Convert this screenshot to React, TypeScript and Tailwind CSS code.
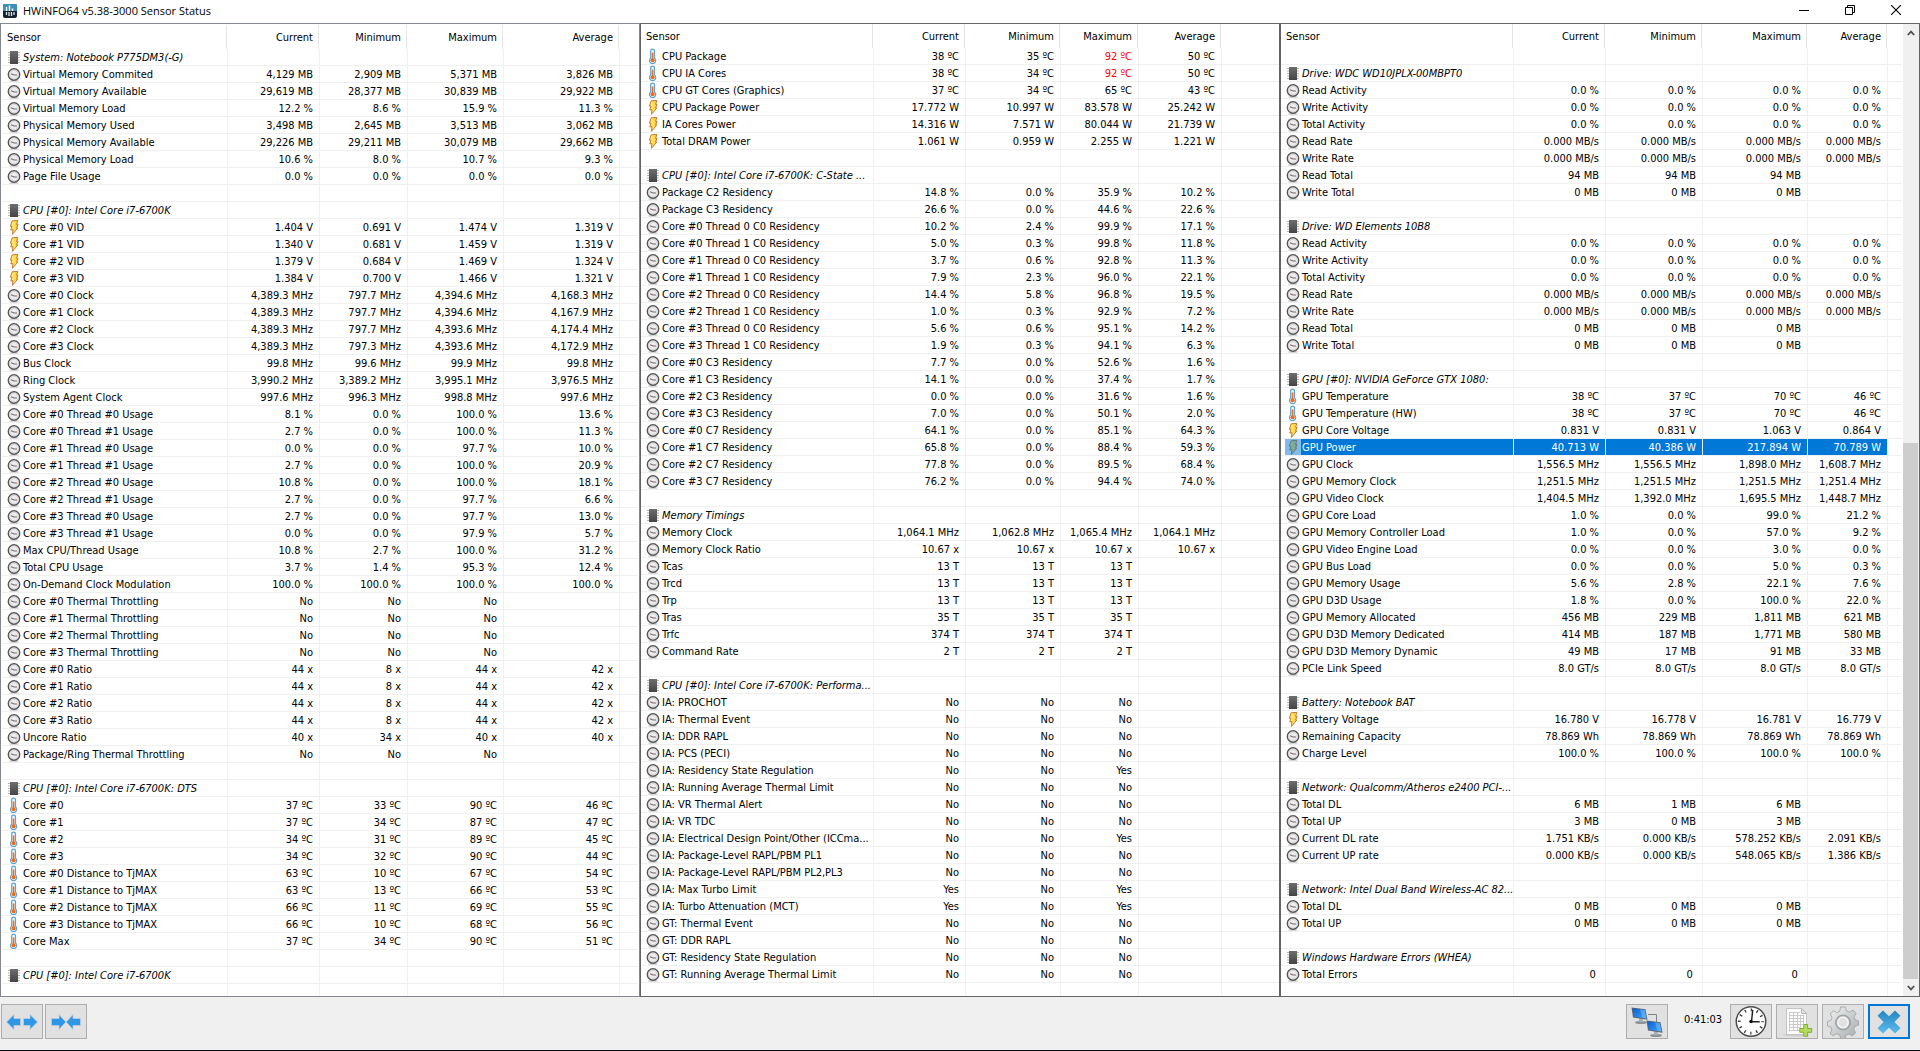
import React from 'react';
import clsx from 'clsx';

type Kind = 'chip' | 'clock' | 'bolt' | 'temp';
type Row = [kind: Kind, name: string, values?: string] | null;

// null is an empty separator row, values are separated by "|"
const leftRows: Row[] = [
  ['chip', 'System: Notebook P775DM3(-G)'],
  ['clock', 'Virtual Memory Commited', '4,129 MB|2,909 MB|5,371 MB|3,826 MB'],
  ['clock', 'Virtual Memory Available', '29,619 MB|28,377 MB|30,839 MB|29,922 MB'],
  ['clock', 'Virtual Memory Load', '12.2 %|8.6 %|15.9 %|11.3 %'],
  ['clock', 'Physical Memory Used', '3,498 MB|2,645 MB|3,513 MB|3,062 MB'],
  ['clock', 'Physical Memory Available', '29,226 MB|29,211 MB|30,079 MB|29,662 MB'],
  ['clock', 'Physical Memory Load', '10.6 %|8.0 %|10.7 %|9.3 %'],
  ['clock', 'Page File Usage', '0.0 %|0.0 %|0.0 %|0.0 %'],
  null,
  ['chip', 'CPU [#0]: Intel Core i7-6700K'],
  ['bolt', 'Core #0 VID', '1.404 V|0.691 V|1.474 V|1.319 V'],
  ['bolt', 'Core #1 VID', '1.340 V|0.681 V|1.459 V|1.319 V'],
  ['bolt', 'Core #2 VID', '1.379 V|0.684 V|1.469 V|1.324 V'],
  ['bolt', 'Core #3 VID', '1.384 V|0.700 V|1.466 V|1.321 V'],
  ['clock', 'Core #0 Clock', '4,389.3 MHz|797.7 MHz|4,394.6 MHz|4,168.3 MHz'],
  ['clock', 'Core #1 Clock', '4,389.3 MHz|797.7 MHz|4,394.6 MHz|4,167.9 MHz'],
  ['clock', 'Core #2 Clock', '4,389.3 MHz|797.7 MHz|4,393.6 MHz|4,174.4 MHz'],
  ['clock', 'Core #3 Clock', '4,389.3 MHz|797.3 MHz|4,393.6 MHz|4,172.9 MHz'],
  ['clock', 'Bus Clock', '99.8 MHz|99.6 MHz|99.9 MHz|99.8 MHz'],
  ['clock', 'Ring Clock', '3,990.2 MHz|3,389.2 MHz|3,995.1 MHz|3,976.5 MHz'],
  ['clock', 'System Agent Clock', '997.6 MHz|996.3 MHz|998.8 MHz|997.6 MHz'],
  ['clock', 'Core #0 Thread #0 Usage', '8.1 %|0.0 %|100.0 %|13.6 %'],
  ['clock', 'Core #0 Thread #1 Usage', '2.7 %|0.0 %|100.0 %|11.3 %'],
  ['clock', 'Core #1 Thread #0 Usage', '0.0 %|0.0 %|97.7 %|10.0 %'],
  ['clock', 'Core #1 Thread #1 Usage', '2.7 %|0.0 %|100.0 %|20.9 %'],
  ['clock', 'Core #2 Thread #0 Usage', '10.8 %|0.0 %|100.0 %|18.1 %'],
  ['clock', 'Core #2 Thread #1 Usage', '2.7 %|0.0 %|97.7 %|6.6 %'],
  ['clock', 'Core #3 Thread #0 Usage', '2.7 %|0.0 %|97.7 %|13.0 %'],
  ['clock', 'Core #3 Thread #1 Usage', '0.0 %|0.0 %|97.9 %|5.7 %'],
  ['clock', 'Max CPU/Thread Usage', '10.8 %|2.7 %|100.0 %|31.2 %'],
  ['clock', 'Total CPU Usage', '3.7 %|1.4 %|95.3 %|12.4 %'],
  ['clock', 'On-Demand Clock Modulation', '100.0 %|100.0 %|100.0 %|100.0 %'],
  ['clock', 'Core #0 Thermal Throttling', 'No|No|No|'],
  ['clock', 'Core #1 Thermal Throttling', 'No|No|No|'],
  ['clock', 'Core #2 Thermal Throttling', 'No|No|No|'],
  ['clock', 'Core #3 Thermal Throttling', 'No|No|No|'],
  ['clock', 'Core #0 Ratio', '44 x|8 x|44 x|42 x'],
  ['clock', 'Core #1 Ratio', '44 x|8 x|44 x|42 x'],
  ['clock', 'Core #2 Ratio', '44 x|8 x|44 x|42 x'],
  ['clock', 'Core #3 Ratio', '44 x|8 x|44 x|42 x'],
  ['clock', 'Uncore Ratio', '40 x|34 x|40 x|40 x'],
  ['clock', 'Package/Ring Thermal Throttling', 'No|No|No|'],
  null,
  ['chip', 'CPU [#0]: Intel Core i7-6700K: DTS'],
  ['temp', 'Core #0', '37 ºC|33 ºC|90 ºC|46 ºC'],
  ['temp', 'Core #1', '37 ºC|34 ºC|87 ºC|47 ºC'],
  ['temp', 'Core #2', '34 ºC|31 ºC|89 ºC|45 ºC'],
  ['temp', 'Core #3', '34 ºC|32 ºC|90 ºC|44 ºC'],
  ['temp', 'Core #0 Distance to TjMAX', '63 ºC|10 ºC|67 ºC|54 ºC'],
  ['temp', 'Core #1 Distance to TjMAX', '63 ºC|13 ºC|66 ºC|53 ºC'],
  ['temp', 'Core #2 Distance to TjMAX', '66 ºC|11 ºC|69 ºC|55 ºC'],
  ['temp', 'Core #3 Distance to TjMAX', '66 ºC|10 ºC|68 ºC|56 ºC'],
  ['temp', 'Core Max', '37 ºC|34 ºC|90 ºC|51 ºC'],
  null,
  ['chip', 'CPU [#0]: Intel Core i7-6700K'],
  null,
];

const middleRows: Row[] = [
  ['temp', 'CPU Package', '38 ºC|35 ºC|92 ºC|50 ºC'],
  ['temp', 'CPU IA Cores', '38 ºC|34 ºC|92 ºC|50 ºC'],
  ['temp', 'CPU GT Cores (Graphics)', '37 ºC|34 ºC|65 ºC|43 ºC'],
  ['bolt', 'CPU Package Power', '17.772 W|10.997 W|83.578 W|25.242 W'],
  ['bolt', 'IA Cores Power', '14.316 W|7.571 W|80.044 W|21.739 W'],
  ['bolt', 'Total DRAM Power', '1.061 W|0.959 W|2.255 W|1.221 W'],
  null,
  ['chip', 'CPU [#0]: Intel Core i7-6700K: C-State ...'],
  ['clock', 'Package C2 Residency', '14.8 %|0.0 %|35.9 %|10.2 %'],
  ['clock', 'Package C3 Residency', '26.6 %|0.0 %|44.6 %|22.6 %'],
  ['clock', 'Core #0 Thread 0 C0 Residency', '10.2 %|2.4 %|99.9 %|17.1 %'],
  ['clock', 'Core #0 Thread 1 C0 Residency', '5.0 %|0.3 %|99.8 %|11.8 %'],
  ['clock', 'Core #1 Thread 0 C0 Residency', '3.7 %|0.6 %|92.8 %|11.3 %'],
  ['clock', 'Core #1 Thread 1 C0 Residency', '7.9 %|2.3 %|96.0 %|22.1 %'],
  ['clock', 'Core #2 Thread 0 C0 Residency', '14.4 %|5.8 %|96.8 %|19.5 %'],
  ['clock', 'Core #2 Thread 1 C0 Residency', '1.0 %|0.3 %|92.9 %|7.2 %'],
  ['clock', 'Core #3 Thread 0 C0 Residency', '5.6 %|0.6 %|95.1 %|14.2 %'],
  ['clock', 'Core #3 Thread 1 C0 Residency', '1.9 %|0.3 %|94.1 %|6.3 %'],
  ['clock', 'Core #0 C3 Residency', '7.7 %|0.0 %|52.6 %|1.6 %'],
  ['clock', 'Core #1 C3 Residency', '14.1 %|0.0 %|37.4 %|1.7 %'],
  ['clock', 'Core #2 C3 Residency', '0.0 %|0.0 %|31.6 %|1.6 %'],
  ['clock', 'Core #3 C3 Residency', '7.0 %|0.0 %|50.1 %|2.0 %'],
  ['clock', 'Core #0 C7 Residency', '64.1 %|0.0 %|85.1 %|64.3 %'],
  ['clock', 'Core #1 C7 Residency', '65.8 %|0.0 %|88.4 %|59.3 %'],
  ['clock', 'Core #2 C7 Residency', '77.8 %|0.0 %|89.5 %|68.4 %'],
  ['clock', 'Core #3 C7 Residency', '76.2 %|0.0 %|94.4 %|74.0 %'],
  null,
  ['chip', 'Memory Timings'],
  ['clock', 'Memory Clock', '1,064.1 MHz|1,062.8 MHz|1,065.4 MHz|1,064.1 MHz'],
  ['clock', 'Memory Clock Ratio', '10.67 x|10.67 x|10.67 x|10.67 x'],
  ['clock', 'Tcas', '13 T|13 T|13 T|'],
  ['clock', 'Trcd', '13 T|13 T|13 T|'],
  ['clock', 'Trp', '13 T|13 T|13 T|'],
  ['clock', 'Tras', '35 T|35 T|35 T|'],
  ['clock', 'Trfc', '374 T|374 T|374 T|'],
  ['clock', 'Command Rate', '2 T|2 T|2 T|'],
  null,
  ['chip', 'CPU [#0]: Intel Core i7-6700K: Performa...'],
  ['clock', 'IA: PROCHOT', 'No|No|No|'],
  ['clock', 'IA: Thermal Event', 'No|No|No|'],
  ['clock', 'IA: DDR RAPL', 'No|No|No|'],
  ['clock', 'IA: PCS (PECI)', 'No|No|No|'],
  ['clock', 'IA: Residency State Regulation', 'No|No|Yes|'],
  ['clock', 'IA: Running Average Thermal Limit', 'No|No|No|'],
  ['clock', 'IA: VR Thermal Alert', 'No|No|No|'],
  ['clock', 'IA: VR TDC', 'No|No|No|'],
  ['clock', 'IA: Electrical Design Point/Other (ICCma...', 'No|No|Yes|'],
  ['clock', 'IA: Package-Level RAPL/PBM PL1', 'No|No|No|'],
  ['clock', 'IA: Package-Level RAPL/PBM PL2,PL3', 'No|No|No|'],
  ['clock', 'IA: Max Turbo Limit', 'Yes|No|Yes|'],
  ['clock', 'IA: Turbo Attenuation (MCT)', 'Yes|No|Yes|'],
  ['clock', 'GT: Thermal Event', 'No|No|No|'],
  ['clock', 'GT: DDR RAPL', 'No|No|No|'],
  ['clock', 'GT: Residency State Regulation', 'No|No|No|'],
  ['clock', 'GT: Running Average Thermal Limit', 'No|No|No|'],
  null,
];

const rightRows: Row[] = [
  null,
  ['chip', 'Drive: WDC WD10JPLX-00MBPT0'],
  ['clock', 'Read Activity', '0.0 %|0.0 %|0.0 %|0.0 %'],
  ['clock', 'Write Activity', '0.0 %|0.0 %|0.0 %|0.0 %'],
  ['clock', 'Total Activity', '0.0 %|0.0 %|0.0 %|0.0 %'],
  ['clock', 'Read Rate', '0.000 MB/s|0.000 MB/s|0.000 MB/s|0.000 MB/s'],
  ['clock', 'Write Rate', '0.000 MB/s|0.000 MB/s|0.000 MB/s|0.000 MB/s'],
  ['clock', 'Read Total', '94 MB|94 MB|94 MB|'],
  ['clock', 'Write Total', '0 MB|0 MB|0 MB|'],
  null,
  ['chip', 'Drive: WD Elements 10B8'],
  ['clock', 'Read Activity', '0.0 %|0.0 %|0.0 %|0.0 %'],
  ['clock', 'Write Activity', '0.0 %|0.0 %|0.0 %|0.0 %'],
  ['clock', 'Total Activity', '0.0 %|0.0 %|0.0 %|0.0 %'],
  ['clock', 'Read Rate', '0.000 MB/s|0.000 MB/s|0.000 MB/s|0.000 MB/s'],
  ['clock', 'Write Rate', '0.000 MB/s|0.000 MB/s|0.000 MB/s|0.000 MB/s'],
  ['clock', 'Read Total', '0 MB|0 MB|0 MB|'],
  ['clock', 'Write Total', '0 MB|0 MB|0 MB|'],
  null,
  ['chip', 'GPU [#0]: NVIDIA GeForce GTX 1080:'],
  ['temp', 'GPU Temperature', '38 ºC|37 ºC|70 ºC|46 ºC'],
  ['temp', 'GPU Temperature (HW)', '38 ºC|37 ºC|70 ºC|46 ºC'],
  ['bolt', 'GPU Core Voltage', '0.831 V|0.831 V|1.063 V|0.864 V'],
  ['bolt', 'GPU Power', '40.713 W|40.386 W|217.894 W|70.789 W'],
  ['clock', 'GPU Clock', '1,556.5 MHz|1,556.5 MHz|1,898.0 MHz|1,608.7 MHz'],
  ['clock', 'GPU Memory Clock', '1,251.5 MHz|1,251.5 MHz|1,251.5 MHz|1,251.4 MHz'],
  ['clock', 'GPU Video Clock', '1,404.5 MHz|1,392.0 MHz|1,695.5 MHz|1,448.7 MHz'],
  ['clock', 'GPU Core Load', '1.0 %|0.0 %|99.0 %|21.2 %'],
  ['clock', 'GPU Memory Controller Load', '1.0 %|0.0 %|57.0 %|9.2 %'],
  ['clock', 'GPU Video Engine Load', '0.0 %|0.0 %|3.0 %|0.0 %'],
  ['clock', 'GPU Bus Load', '0.0 %|0.0 %|5.0 %|0.3 %'],
  ['clock', 'GPU Memory Usage', '5.6 %|2.8 %|22.1 %|7.6 %'],
  ['clock', 'GPU D3D Usage', '1.8 %|0.0 %|100.0 %|22.0 %'],
  ['clock', 'GPU Memory Allocated', '456 MB|229 MB|1,811 MB|621 MB'],
  ['clock', 'GPU D3D Memory Dedicated', '414 MB|187 MB|1,771 MB|580 MB'],
  ['clock', 'GPU D3D Memory Dynamic', '49 MB|17 MB|91 MB|33 MB'],
  ['clock', 'PCIe Link Speed', '8.0 GT/s|8.0 GT/s|8.0 GT/s|8.0 GT/s'],
  null,
  ['chip', 'Battery: Notebook BAT'],
  ['bolt', 'Battery Voltage', '16.780 V|16.778 V|16.781 V|16.779 V'],
  ['clock', 'Remaining Capacity', '78.869 Wh|78.869 Wh|78.869 Wh|78.869 Wh'],
  ['clock', 'Charge Level', '100.0 %|100.0 %|100.0 %|100.0 %'],
  null,
  ['chip', 'Network: Qualcomm/Atheros e2400 PCI-...'],
  ['clock', 'Total DL', '6 MB|1 MB|6 MB|'],
  ['clock', 'Total UP', '3 MB|0 MB|3 MB|'],
  ['clock', 'Current DL rate', '1.751 KB/s|0.000 KB/s|578.252 KB/s|2.091 KB/s'],
  ['clock', 'Current UP rate', '0.000 KB/s|0.000 KB/s|548.065 KB/s|1.386 KB/s'],
  null,
  ['chip', 'Network: Intel Dual Band Wireless-AC 82...'],
  ['clock', 'Total DL', '0 MB|0 MB|0 MB|'],
  ['clock', 'Total UP', '0 MB|0 MB|0 MB|'],
  null,
  ['chip', 'Windows Hardware Errors (WHEA)'],
  ['clock', 'Total Errors', '0 |0 |0 |'],
  null,
];

const SensorIcon = ({ kind, selected }: { kind: Kind; selected?: boolean }) => (
  <svg viewBox="0 0 16 16" className="h-4 w-4 shrink-0" aria-hidden="true">
    {kind === 'chip' && (
      <>
        <path d="M2 3.5h12M2 6h12M2 8.5h12M2 11h12M2 13.5h12" stroke="#b4b4b4" strokeWidth="1.2" />
        <rect x="4" y="2" width="8" height="13" fill="url(#chipBody)" />
      </>
    )}
    {kind === 'clock' && (
      <>
        <ellipse cx="8" cy="15" rx="5" ry="1" fill="#d5d5d5" />
        <circle cx="8" cy="8.5" r="5.7" fill="#ececec" stroke="#555" strokeWidth="1.4" />
        <circle cx="8" cy="8.5" r="4.4" fill="none" stroke="#cdcdcd" strokeWidth="0.8" />
        <path d="M5 7.8l3 1.2h3" fill="none" stroke="#7a6a66" strokeWidth="1.1" />
      </>
    )}
    {kind === 'temp' && (
      <>
        <path
          d="M5.7 3a1.9 1.9 0 0 1 3.8 0v7a3.1 3.1 0 1 1-3.8 0z"
          fill="#e9f6fd"
          stroke="#5fa3cd"
          strokeWidth="1.2"
        />
        <path d="M7.6 4.5v8" stroke="#ef6c1a" strokeWidth="1.6" />
        <circle cx="7.6" cy="12.3" r="2" fill="#f06a14" />
      </>
    )}
    {kind === 'bolt' && (
      <path
        d="M6.2 1.8L11.8 1.4 10.6 5.4 12 5.2 10.6 9 11.8 9 6.4 15.4 7 10.6 4.8 11 6 7.2 4.4 7.2z"
        fill="url(#boltFill)"
        stroke="#c07a35"
        strokeWidth="1"
        strokeLinejoin="round"
      />
    )}
    {selected && <rect width="16" height="16" fill="#0078d7" opacity="0.5" />}
  </svg>
);

type PanelProps = {
  rows: Row[];
  widths: string[];
  className: string;
  selectedRow?: string;
  alerts?: string;
};

const headings = ['Current', 'Minimum', 'Maximum', 'Average'];

const SensorTable = ({ rows, widths, className, selectedRow, alerts }: PanelProps) => (
  <div className={clsx('min-w-0 overflow-hidden bg-white', className)}>
    <table className="w-full table-fixed border-separate border-spacing-0 whitespace-pre">
      <colgroup>
        {widths.map((width, i) => (
          <col key={i} className={width} />
        ))}
        <col />
      </colgroup>
      <thead>
        <tr className="h-6">
          <th scope="col" className="p-0 pr-px text-left font-normal">
            <div className="h-6 border-r border-[#e5e5e5] pt-px pl-[5px] leading-6">Sensor</div>
          </th>
          {headings.map((heading) => (
            <th key={heading} scope="col" className="p-0 pr-px text-right font-normal">
              <div className="h-6 border-r border-[#e5e5e5] pt-px pr-[5px] leading-6">{heading}</div>
            </th>
          ))}
          <td />
        </tr>
      </thead>
      <tbody>
        {rows.map((row, i) => {
          const [kind, name, values = '|||'] = row ?? [null, ''];
          const selected = name !== '' && name === selectedRow;
          const cell = 'h-[17px] border-b border-r border-[#f0f0f0]';
          const fill = selected && 'bg-[#0078d7] bg-clip-padding text-white';
          return (
            <tr key={i}>
              <td className={clsx(cell, 'p-0')}>
                {kind && (
                  <div className="flex h-4 pl-1">
                    <SensorIcon kind={kind} selected={selected} />
                    <span className={clsx('flex-1 pt-[2px] pl-px leading-[14px]', kind === 'chip' && 'italic', fill)}>
                      {name}
                    </span>
                  </div>
                )}
              </td>
              {values.split('|').map((value, j) => (
                <td
                  key={j}
                  className={clsx(
                    cell,
                    'pt-[2px] pr-[6px] pb-0 pl-0 text-right leading-[14px]',
                    fill,
                    alerts && value === alerts && 'text-[#ff0000]',
                  )}
                >
                  {value}
                </td>
              ))}
              <td className="border-b border-[#f0f0f0] p-0" />
            </tr>
          );
        })}
      </tbody>
    </table>
  </div>
);

const ScrollBar = () => (
  <div className="flex w-4 shrink-0 flex-col bg-[#f0f0f0]">
    <button aria-label="Scroll up" className="flex h-[17px] items-center justify-center">
      <svg viewBox="0 0 8 6" className="h-[6px] w-2">
        <path d="M0.8 5L4 1.6L7.2 5" fill="none" stroke="#505050" strokeWidth="1.8" />
      </svg>
    </button>
    <div className="flex flex-1 flex-col">
      <div className="flex-3" />
      <div className="mr-px flex-4 bg-[#cdcdcd]" />
    </div>
    <button aria-label="Scroll down" className="flex h-[17px] items-center justify-center">
      <svg viewBox="0 0 8 6" className="h-[6px] w-2">
        <path d="M0.8 1L4 4.4L7.2 1" fill="none" stroke="#505050" strokeWidth="1.8" />
      </svg>
    </button>
  </div>
);

const TitleBar = () => (
  <header className="flex h-[23px] shrink-0 items-start justify-between bg-white pl-[3px]">
    <div className="flex h-[22px] items-center gap-[6px]">
      <svg viewBox="0 0 14 14" className="h-[14px] w-[14px]">
        <rect width="14" height="14" rx="2" fill="#16232c" />
        <path d="M0 2a2 2 0 0 1 2-2h10a2 2 0 0 1 2 2v5H0z" fill="#3f8fb8" />
        <path d="M3.5 3v4M6.5 1.5v5.5M9.5 4.5v2.5" stroke="#fff" strokeWidth="1.4" />
        <path d="M3.5 8v3M6 8v4M8.5 8v4M11 8v3" stroke="#d8e4ea" strokeWidth="1.3" />
      </svg>
      <h1 className="pt-px font-['Open_Sans','Noto_Sans',sans-serif] text-[11px] text-black">
        HWiNFO64 v5.38-3000 Sensor Status
      </h1>
    </div>
    <div className="flex pr-px">
      <button aria-label="Minimize" className="flex h-5 w-[46px] items-center justify-center">
        <svg viewBox="0 0 10 10" className="h-[10px] w-[10px]">
          <path d="M0 5.5h10" stroke="#000" />
        </svg>
      </button>
      <button aria-label="Restore" className="flex h-5 w-[46px] items-center justify-center">
        <svg viewBox="0 0 10 10" className="h-[10px] w-[10px]">
          <path d="M0.5 2.5h7v7h-7zM2.5 2.5v-2h7v7h-2" fill="none" stroke="#000" />
        </svg>
      </button>
      <button aria-label="Close" className="flex h-5 w-[46px] items-center justify-center">
        <svg viewBox="0 0 10 10" className="h-[10px] w-[10px]">
          <path d="M0 0l10 10M10 0L0 10" stroke="#000" strokeWidth="1.1" />
        </svg>
      </button>
    </div>
  </header>
);

type ToolButtonProps = { label: string; primary?: boolean; children: React.ReactNode };

const ToolButton = ({ label, primary, children }: ToolButtonProps) => (
  <button
    aria-label={label}
    className={clsx(
      'flex h-[35px] w-[42px] items-center justify-center bg-[#e1e1e1]',
      primary ? 'border-2 border-[#0078d7]' : 'border border-[#adadad]',
    )}
  >
    {children}
  </button>
);

const Monitor = () => (
  <>
    <ellipse cx="10" cy="15.5" rx="6" ry="1.6" fill="#8d9499" />
    <path d="M8 11l4 1v3H8z" fill="#a9b0b5" />
    <path d="M0.5 0.5l14 1.8 2 10.5L2 10.5z" fill="#59636b" />
    <path d="M1.4 1.3l12.4 1.6 1.7 8.7L2.8 9.7z" fill="url(#screen)" />
    <path d="M9 2.4l4.8 0.5 1.7 8.7-4-0.6z" fill="#7cc3ff" opacity="0.5" />
  </>
);

const Footer = () => (
  <footer className="flex h-[54px] shrink-0 justify-between border-b border-[#0b0b12] bg-[#f0f0f0] pt-[7px] pr-[10px] pl-px">
    <div className="flex gap-[2px]">
      <ToolButton label="Expand columns">
        <svg viewBox="0 0 32 18" className="h-[18px] w-8">
          <path
            d="M0.5 9L8 1.5V5.5h6.5v7H8v4zM31.5 9L24 1.5V5.5h-6.5v7H24v4z"
            fill="#2f97e8"
            stroke="#c3ccd4"
            strokeWidth="0.8"
          />
        </svg>
      </ToolButton>
      <ToolButton label="Shrink columns">
        <svg viewBox="0 0 32 18" className="h-[18px] w-8">
          <path
            d="M15.8 9L9 1.5V5.5H1.5v7H9v4zM16.2 9L23 1.5V5.5h7.5v7H23v4z"
            fill="#2f97e8"
            stroke="#c3ccd4"
            strokeWidth="0.8"
          />
        </svg>
      </ToolButton>
    </div>
    <div className="flex gap-1">
      <ToolButton label="Remote sensors">
        <svg viewBox="0 0 32 32" className="h-8 w-8 shrink-0">
          <path d="M17 8.5h8.5V16" fill="none" stroke="#7d8488" strokeWidth="1" />
          <g transform="translate(0 1)">
            <Monitor />
          </g>
          <g transform="translate(15 14)">
            <Monitor />
          </g>
        </svg>
      </ToolButton>
      <time className="mr-px ml-3 w-[41px] leading-8">0:41:03</time>
      <ToolButton label="Reset clock">
        <svg viewBox="0 0 34 34" className="h-[33px] w-[34px] shrink-0">
          <circle cx="17" cy="17" r="15.2" fill="#fff" stroke="#4a4a4a" strokeWidth="1.5" />
          <circle
            cx="17"
            cy="17"
            r="12"
            fill="none"
            stroke="#333"
            strokeWidth="3"
            strokeDasharray="1.3 4.983"
            strokeDashoffset="0.65"
          />
          <path d="M17.5 17L18.8 5M17 17.3h9" fill="none" stroke="#222" strokeWidth="1.5" />
          <circle cx="17" cy="17" r="1.8" fill="#111" />
        </svg>
      </ToolButton>
      <ToolButton label="Start logging">
        <svg viewBox="0 0 32 32" className="h-8 w-8 shrink-0">
          <ellipse cx="15" cy="29" rx="13" ry="1.5" fill="#cdcdcd" />
          <path d="M5.5 2.5h15l5 5v21h-20z" fill="#fbfbfb" stroke="#c4c4c4" />
          <path d="M20.5 2.5v5h5z" fill="#e3e3e3" stroke="#b9b9b9" />
          <path
            d="M8 6.5h11M8 9.5h15M8 12.5h15M8 15.5h15M8 18.5h15M8 21.5h12M8 24.5h12M8.5 6v19M12.5 6v19M16.5 6v19M19.5 9v12M22.5 9v9"
            stroke="#c6c6c6"
            strokeWidth="0.9"
          />
          <path
            d="M22.8 18.5h3.8v4h4v3.8h-4v4h-3.8v-4h-4v-3.8h4z"
            fill="#b4dc5c"
            stroke="#7fae30"
          />
        </svg>
      </ToolButton>
      <ToolButton label="Configure sensors">
        <svg viewBox="0 0 32 32" className="h-8 w-8 shrink-0">
          <path
            d="M13.6 1h4.8l1 4 3 1.2 3.5-2.2 3.2 3.4-2.1 3.5 1.2 3 3.3 1v4.2l-3.5 1.1-1.3 3 1.9 3.6-3.3 3.1-3.4-1.9-2.9 1.2-1 3.3h-4.2l-1.1-3.4-3-1.3-3.5 2L3 27.5l1.9-3.5-1.2-2.9L0.5 20v-4.4l3.4-1.1 1.2-3L3.3 8l3.1-3.3 3.5 1.9 2.8-1.3z"
            fill="url(#metal)"
            stroke="#9a9fa1"
            strokeWidth="0.8"
          />
          <circle cx="16" cy="16.5" r="7.5" fill="#aeb3b5" stroke="#8d9294" strokeWidth="0.8" />
          <circle cx="16" cy="16.5" r="5.2" fill="#e1e1e1" stroke="#f7f7f7" strokeWidth="1.5" />
        </svg>
      </ToolButton>
      <ToolButton label="Close sensors" primary>
        <svg viewBox="0 0 24 24" className="h-6 w-6 shrink-0">
          <path
            d="M6 0.5l6 5.7 6-5.7 5.5 5.2-6 6.3 6 6.3-5.5 5.2-6-5.7-6 5.7-5.5-5.2 6-6.3-6-6.3z"
            fill="url(#cross)"
          />
        </svg>
      </ToolButton>
    </div>
  </footer>
);

// shared gradients for all the icons
const Gradients = () => (
  <svg className="absolute h-0 w-0" aria-hidden="true">
    <defs>
      <linearGradient id="chipBody" x1="0" y1="0" x2="0" y2="1">
        <stop offset="0" stopColor="#6e6e6e" />
        <stop offset="1" stopColor="#444" />
      </linearGradient>
      <linearGradient id="boltFill" x1="0" y1="0" x2="1" y2="0">
        <stop offset="0" stopColor="#fff3a0" />
        <stop offset="1" stopColor="#ffcc10" />
      </linearGradient>
      <linearGradient id="screen" x1="0" y1="0" x2="1" y2="1">
        <stop offset="0" stopColor="#0b5fd0" />
        <stop offset="1" stopColor="#3fa2ff" />
      </linearGradient>
      <linearGradient id="metal" x1="0" y1="0" x2="1" y2="1">
        <stop offset="0" stopColor="#f2f4f4" />
        <stop offset="1" stopColor="#a7abad" />
      </linearGradient>
      <linearGradient id="cross" x1="0" y1="0" x2="0" y2="1">
        <stop offset="0" stopColor="#2586c0" />
        <stop offset="1" stopColor="#5cbcf0" />
      </linearGradient>
    </defs>
  </svg>
);

const App = () => {
  return (
    <div className="flex h-screen flex-col overflow-hidden bg-[#f0f0f0] font-['DejaVu_Sans_Condensed','DejaVu_Sans',sans-serif] text-[11px] text-black">
      <Gradients />
      <TitleBar />
      <main className="grid min-h-0 flex-1 grid-cols-3 grid-rows-1">
        <SensorTable
          rows={leftRows}
          widths={['w-[226px]', 'w-[92px]', 'w-[88px]', 'w-[96px]', 'w-[116px]']}
          className="border border-[#828790] p-px"
        />
        <SensorTable
          rows={middleRows}
          widths={['w-[233px]', 'w-[92px]', 'w-[95px]', 'w-[78px]', 'w-[83px]']}
          className="border border-[#646464]"
          alerts="92 ºC"
        />
        <div className="flex min-w-0 border border-[#646464] bg-white">
          <SensorTable
            rows={rightRows}
            widths={['w-[233px]', 'w-[92px]', 'w-[97px]', 'w-[105px]', 'w-[80px]']}
            className="flex-1 pr-px"
            selectedRow="GPU Power"
          />
          <ScrollBar />
        </div>
      </main>
      <Footer />
    </div>
  );
};

export default App;
